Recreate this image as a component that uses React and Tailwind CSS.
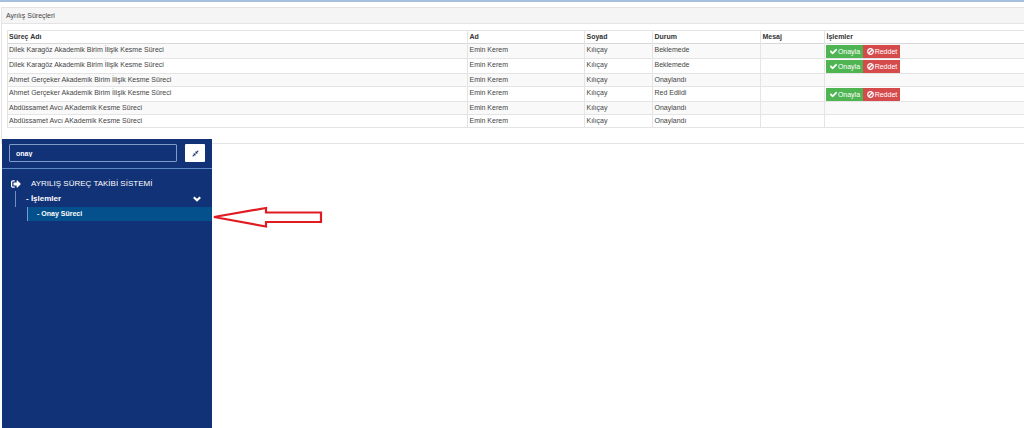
import { FaCheck, FaSignOutAlt, FaCompressAlt } from 'react-icons/fa';

const rows = [
  { name: 'Dilek Karagöz Akademik Birim İlişik Kesme Süreci', status: 'Beklemede', actions: true },
  { name: 'Dilek Karagöz Akademik Birim İlişik Kesme Süreci', status: 'Beklemede', actions: true },
  { name: 'Ahmet Gerçeker Akademik Birim İlişik Kesme Süreci', status: 'Onaylandı', actions: false },
  { name: 'Ahmet Gerçeker Akademik Birim İlişik Kesme Süreci', status: 'Red Edildi', actions: true },
  { name: 'Abdüssamet Avcı AKademik Kesme Süreci', status: 'Onaylandı', actions: false },
  { name: 'Abdüssamet Avcı AKademik Kesme Süreci', status: 'Onaylandı', actions: false },
];

const headings = ['Süreç Adı', 'Ad', 'Soyad', 'Durum', 'Mesaj', 'İşlemler'];

function BanIcon() {
  return (
    <svg className="size-[7px]" viewBox="0 0 14 14" fill="none" stroke="currentColor" strokeWidth="2.4" aria-hidden="true">
      <circle cx="7" cy="7" r="5.6" />
      <path d="M3 11 L11 3" />
    </svg>
  );
}

function ChevronIcon() {
  return (
    <svg className="h-[6px] w-2" viewBox="0 0 16 12" fill="none" stroke="currentColor" strokeWidth="4.4" aria-hidden="true">
      <path d="M1.6 2.4 L8 8.4 L14.4 2.4" />
    </svg>
  );
}

function Actions() {
  return (
    <div className="flex pt-px">
      <button type="button" className="flex h-[13px] w-[37px] items-center justify-center gap-px bg-[#4fb553] text-white">
        <FaCheck className="size-[7px]" stroke="currentColor" strokeWidth="40" />
        Onayla
      </button>
      <button type="button" className="flex h-[13px] w-[37px] items-center justify-center gap-px bg-[#d54b4b] text-white">
        <BanIcon />
        Reddet
      </button>
    </div>
  );
}

function ProcessTable() {
  return (
    <table className="w-full table-fixed border-collapse border border-r-0 border-[#e4e4e4] text-left">
      <colgroup>
        <col className="w-[45.3%]" />
        <col className="w-[117px]" />
        <col className="w-[68px]" />
        <col className="w-[108px]" />
        <col className="w-[64px]" />
        <col />
      </colgroup>
      <thead>
        <tr className="h-[13px] border-b border-[#d8d8d8]">
          {headings.map((h) => (
            <th key={h} scope="col" className="border-l border-[#e4e4e4] px-px py-0 font-bold text-[#333]">{h}</th>
          ))}
        </tr>
      </thead>
      <tbody>
        {rows.map((r, i) => (
          <tr key={i} className="h-[13px] border-b border-[#e4e4e4] align-top odd:bg-[#f9f9f9]">
            <td className="border-l border-[#e4e4e4] px-px">{r.name}</td>
            <td className="border-l border-[#e4e4e4] px-px">Emin Kerem</td>
            <td className="border-l border-[#e4e4e4] px-px">Kılıçay</td>
            <td className="border-l border-[#e4e4e4] px-px">{r.status}</td>
            <td className="border-l border-[#e4e4e4] px-px" />
            <td className="border-l border-[#e4e4e4] px-px">{r.actions && <Actions />}</td>
          </tr>
        ))}
      </tbody>
    </table>
  );
}

function Sidebar() {
  return (
    <nav className="relative -mt-[5px] ml-[2px] w-[210px] grow bg-[#113276] text-white">
      <div className="flex h-[30px] items-start justify-between border-b border-[#5b8ac0] px-[7px] pt-[5px]">
        <input
          aria-label="Menüde ara"
          defaultValue="onay"
          className="h-[18px] w-[168px] rounded-[1px] border border-[#7f9cc9] bg-transparent px-[6px] font-bold text-white outline-none"
        />
        <button type="button" aria-label="Menüyü daralt" className="flex h-[18px] w-5 items-center justify-center rounded-[1px] bg-white text-[#113276]">
          <FaCompressAlt className="size-[7px]" />
        </button>
      </div>
      <a href="#sistem" className="mt-2 flex h-[13px] items-center gap-[10px] pl-[9px] text-[8px]">
        <FaSignOutAlt className="size-[10px]" />
        AYRILIŞ SÜREÇ TAKİBİ SİSTEMİ
      </a>
      <div className="mt-px ml-[13px]">
        <button type="button" aria-expanded="true" className="flex h-4 w-full items-center justify-between border-l border-[#6f8fc0] pr-[11px] pl-[10px] text-[8px] font-bold">
          - İşlemler
          <ChevronIcon />
        </button>
        <a href="#onay" className="ml-3 flex h-[14px] items-center border-l border-[#6f9fd0] bg-[#04508c] pl-[9px] font-bold">
          - Onay Süreci
        </a>
      </div>
      <svg className="absolute top-[67px] left-[209px] h-6 w-[112px]" viewBox="0 0 112 24" fill="none" stroke="#e01b22" strokeWidth="2.2" aria-hidden="true">
        <path d="M3 11 L55 2 V6.5 H110 V16 H55 V20.5 Z" />
      </svg>
    </nav>
  );
}

export default function App() {
  return (
    <div className="flex min-h-screen flex-col overflow-x-hidden border-t-2 border-[#a5c0dc] bg-white font-['Liberation_Sans',Arial,sans-serif] text-[7px] leading-[12px] text-[#444]">
      <section className="mt-[5px] ml-px border border-r-0 border-[#e4e4e4]">
        <h1 className="h-4 border-b border-[#e4e4e4] bg-[#f5f5f5] pt-[2px] pl-1">Ayrılış Süreçleri</h1>
        <div className="pt-[6px] pb-[15px] pl-[5px]">
          <ProcessTable />
        </div>
      </section>
      <Sidebar />
    </div>
  );
}
